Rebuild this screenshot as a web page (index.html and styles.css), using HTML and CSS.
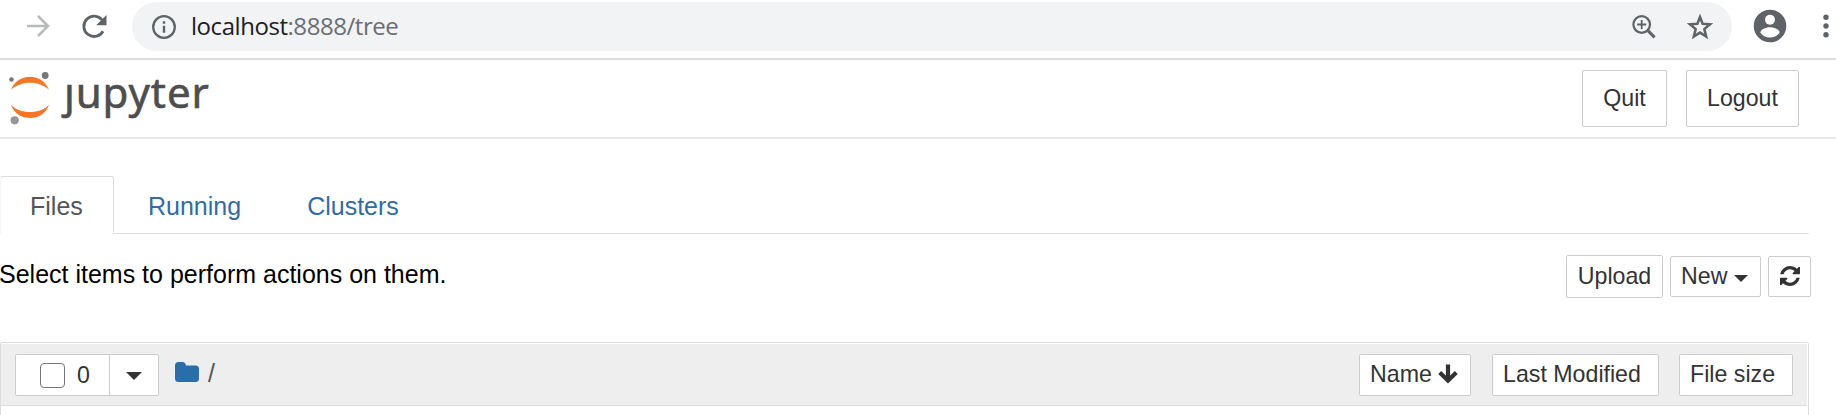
FILE: index.html
```html
<!DOCTYPE html>
<html lang="en">
<head>
<meta charset="utf-8">
<title>Home Page - Select or create a notebook</title>
<link rel="stylesheet" href="styles.css">
</head>
<body>
<div class="toolbar">
  <svg class="forward" width="24" height="24" viewBox="0 0 24 24"><path d="M1 12H22M12 2L22 12L12 22" fill="none" stroke="#b9babc" stroke-width="2.6"/></svg>
  <svg class="reload" width="26" height="26" viewBox="0 0 26 26"><path d="M21 17.2A10.2 10.2 0 1 1 20.1 6" fill="none" stroke="#5f6368" stroke-width="2.8"/><path d="M24.500 1V11.300H14.200Z" fill="#5f6368"/></svg>
  <div class="omnibox">
    <svg class="info" width="24" height="24" viewBox="0 0 24 24"><circle cx="12" cy="12" r="10.8" fill="none" stroke="#5f6368" stroke-width="2.3"/><path d="M10.8 10.7h2.4v7h-2.4zM10.8 6.2h2.4v2.5h-2.4z" fill="#5f6368"/></svg>
    <div class="url">localhost<span>:8888/tree</span></div>
    <svg class="zoom" width="24" height="24" viewBox="0 0 24 24"><g fill="none" stroke="#5f6368"><circle cx="9.7" cy="9.5" r="8.3" stroke-width="2.2"/><path d="M9.7 5v9M5.2 9.5h9" stroke-width="1.8"/><path d="M15.6 15.4L22.6 22.4" stroke-width="3"/></g></svg>
    <svg class="star" width="26" height="26" viewBox="0 0 26 26"><path d="M13 3L15.600 9.700L23 10.300L17.300 15.100L19.200 22.600L13 18.600L6.800 22.600L8.700 15.100L3 10.300L10.400 9.700Z" fill="none" stroke="#5f6368" stroke-width="2.500"/></svg>
  </div>
  <svg class="profile" width="34" height="34" viewBox="0 0 34 34"><circle cx="17" cy="17" r="16.3" fill="#5f6368"/><circle cx="17" cy="10.7" r="5" fill="#fff"/><path d="M7.3 23.5C8 19.8 13.8 18.3 17 18.3S26 19.8 26.7 23.5C24.5 26.7 21 28.5 17 28.5S9.500 26.700 7.300 23.500Z" fill="#fff"/></svg>
  <svg class="dots" width="8" height="26" viewBox="0 0 8 26"><g fill="#5f6368"><circle cx="4" cy="4.300" r="2.700"/><circle cx="4" cy="13" r="2.700"/><circle cx="4" cy="21.700" r="2.700"/></g></svg>
</div>
<header class="header">
  <div class="logo">
    <svg width="44" height="56" viewBox="0 0 44 56"><path d="M3 20C6 11.500 13.500 6.700 22 6.700S38 11.500 41 20C36.500 15.500 29.500 12.800 22 12.800S7.500 15.500 3 20Z" fill="#f37726"/><path d="M3 35C6 43.500 13.500 48 22 48S38 43.500 41 35C36.500 39.500 29.500 42 22 42S7.500 39.500 3 35Z" fill="#f37726"/><circle cx="37.200" cy="5.500" r="3.400" fill="#767677"/><circle cx="3.500" cy="9.500" r="2.300" fill="#767677"/><circle cx="6.700" cy="50.300" r="4.100" fill="#989798"/></svg>
    <div class="wordmark"><span class="dotless">j</span>upyter</div>
  </div>
  <button class="btn nav quit">Quit</button>
  <button class="btn nav logout">Logout</button>
</header>
<nav class="tabs">
  <a class="tab active">Files</a><a class="tab running">Running</a><a class="tab clusters">Clusters</a>
</nav>
<div class="actions">
  <div class="hint">Select items to perform actions on them.</div>
  <button class="btn upload">Upload</button>
  <button class="btn new">New<i class="caret"></i></button>
  <button class="btn refresh"><svg width="20" height="20" viewBox="0 0 1536 1536"><path fill="#333" d="M1511 928q0 5-1 7-64 268-268 434.500T764 1536q-146 0-282.500-55T238 1324l-129 129q-19 19-45 19t-45-19-19-45V960q0-26 19-45t45-19h448q26 0 45 19t19 45-19 45l-137 137q71 66 161 102t187 36q134 0 250-65t186-179q11-17 53-117 8-23 30-23h192q13 0 22.500 9.500t9.500 22.500zm25-800v448q0 26-19 45t-45 19h-448q-26 0-45-19t-19-45 19-45l138-138Q969 256 768 256q-134 0-250 65T332 500q-11 17-53 117-8 23-30 23H50q-13 0-22.500-9.500T18 608v-7q65-268 270-434.500T768 0q146 0 284 55.500T1297 212l130-129q19-19 45-19t45 19 19 45z"/></svg></button>
</div>
<section class="list">
  <div class="list-header">
    <div class="select">
      <button class="btn check"><i class="box"></i>0</button>
      <button class="btn drop"><i class="caret"></i></button>
    </div>
    <svg class="folder" width="24" height="20" viewBox="0 0 24 20"><path d="M0 3.500Q0 0 3.500 0H7.300Q10.800 0 10.800 3.500H20.500Q24 3.500 24 7V16.500Q24 20 20.500 20H3.500Q0 20 0 16.500Z" fill="#296eaa"/></svg>
    <div class="slash">/</div>
    <button class="btn name">Name<svg width="20" height="20" viewBox="0 0 20 20"><path d="M10 0.500V16M1.700 8.500L10 16.500L18.300 8.500" fill="none" stroke="#333" stroke-width="4.200"/></svg></button>
    <button class="btn modified">Last Modified</button>
    <button class="btn size">File size</button>
  </div>
</section>
</body>
</html>
```
FILE: styles.css
```css
* { box-sizing: border-box; }
html, body { margin: 0; height: 415px; overflow: hidden; background: #fff; }
body { font-family: "Liberation Sans", Arial, sans-serif; font-size: 25px; color: #000; display: flex; flex-direction: column; }
svg { display: block; flex: none; }

.toolbar { height: 60px; flex: none; border-bottom: 2px solid #dadce0; display: flex; align-items: flex-start; padding-left: 26px; }
.forward { margin-top: 14px; }
.reload { margin: 14px 0 0 32px; }
.omnibox { margin: 2px 0 0 24px; width: 1600px; height: 49px; flex: none; border-radius: 25px; background: #f1f3f4; display: flex; align-items: center; padding-left: 20px; }
.url { margin-left: 15px; width: 1441px; font: 24px/46px "Open Sans", sans-serif; letter-spacing: -0.45px; color: #202124; white-space: nowrap; padding-bottom: 2px; }
.url span { color: #6b6e72; }
.star { margin-left: 31px; }
.profile { margin: 9px 0 0 21px; }
.dots { margin: 13px 0 0 35px; }

.header { height: 79px; flex: none; border-bottom: 2px solid #e7e7e7; display: flex; align-items: flex-start; padding: 10px 37px 0 8px; }
.logo { display: flex; flex: 1; }
.wordmark { margin-left: 12px; height: 60px; font: 42px/44px "Noto Sans", sans-serif; letter-spacing: 0.9px; color: #4e4e4e; -webkit-text-stroke: 0.6px #4e4e4e; }
.dotless { display: inline-block; clip-path: inset(14px -10px -10px -10px); }

.btn { font: 23.2px/30px "Liberation Sans", Arial, sans-serif; color: #333; background: #fff; border: 1px solid #ccc; border-radius: 2px; padding: 0 0 2px; margin: 0; height: 42px; flex: none; display: flex; align-items: center; white-space: nowrap; }
.nav { height: 57px; justify-content: center; }
.quit { width: 85px; margin-right: 19px; }
.logout { width: 113px; }
.caret { border: 7px solid transparent; border-top: 7px solid #333; border-bottom: 0; }

.tabs { width: 1809px; height: 58px; flex: none; margin-top: 37px; border-bottom: 1px solid #ddd; display: flex; }
.tab { height: 58px; line-height: 60px; color: #336c9f; }
.active { width: 114px; padding-left: 29px; line-height: 58px; color: #555; background: #fff; border: 1px solid #ddd; border-left-color: #f4f4f4; border-bottom-color: #fff; border-radius: 3px 3px 0 0; }
.running { margin-left: 34px; }
.clusters { margin-left: 66px; }

.actions { width: 1811px; height: 108px; flex: none; display: flex; align-items: flex-start; padding-top: 21px; }
.hint { flex: 1; line-height: 38px; margin-left: -1px; }
.upload { width: 97px; height: 43px; justify-content: center; }
.new { width: 91px; height: 41px; margin: 1px 7px 0; padding-left: 10px; }
.new .caret { margin: 6px 0 0 7px; }
.refresh { width: 43px; height: 41px; margin-top: 1px; justify-content: center; }

.list { width: 1809px; height: 80px; flex: none; border: 1px solid #ddd; border-radius: 2px; padding: 1px 1px 0 0; }
.list-header { height: 62px; background: #eee; border-bottom: 1px solid #ddd; display: flex; align-items: flex-start; padding: 10px 14px 0 14px; }
.select { display: flex; }
.check { width: 95px; padding: 0 0 0 24px; border-radius: 2px 0 0 2px; }
.box { width: 25px; height: 25px; border: 1px solid #767676; border-radius: 4px; margin-right: 12px; }
.drop { width: 50px; margin-left: -1px; border-radius: 0 2px 2px 0; justify-content: center; }
.drop .caret { border-width: 8px 8px 0; margin-top: 4px; }
.folder { margin: 8px 0 0 16px; }
.slash { flex: 1; margin-left: 9px; line-height: 38px; color: #555; font-size: 25px; }
.name { width: 112px; padding-left: 10px; }
.name svg { margin-left: 6px; }
.modified { width: 167px; margin: 0 20px 0 21px; padding-left: 10px; }
.size { width: 114px; padding-left: 10px; }
```
